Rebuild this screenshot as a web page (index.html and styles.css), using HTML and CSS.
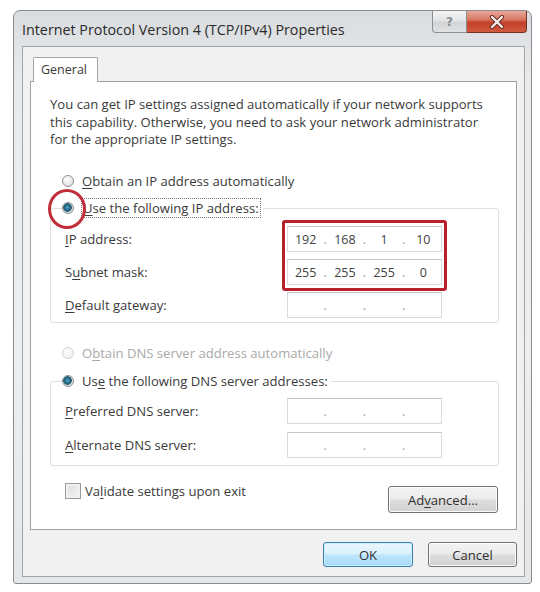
FILE: index.html
```html
<!DOCTYPE html>
<html>
<head>
<meta charset="utf-8">
<link rel="stylesheet" href="styles.css">
</head>
<body>
<div class="window">
  <div class="titlebar">
    <div class="title">Internet Protocol Version 4 (TCP/IPv4) Properties</div>
    <div class="caption-buttons">
      <div class="cbtn help"><span class="qmark">?</span></div>
      <div class="cbtn close">
        <svg width="16" height="14" viewBox="0 0 16 14"><path d="M3 2 L13 12 M13 2 L3 12" stroke="#6b2a22" stroke-width="4.2" stroke-linecap="round"/><path d="M3 2 L13 12 M13 2 L3 12" stroke="#f6eeee" stroke-width="2.4" stroke-linecap="round"/></svg>
      </div>
    </div>
  </div>
  <div class="client">
    <div class="tabs"><div class="tab">General</div></div>
    <div class="panel">
      <p class="desc">You can get IP settings assigned automatically if your network supports<br>this capability. Otherwise, you need to ask your network administrator<br>for the appropriate IP settings.</p>
      <div class="option first"><span class="radio"></span><span><u>O</u>btain an IP address automatically</span></div>
      <fieldset class="group ipgroup">
        <legend><span class="option"><span class="radio checked"></span><span class="focus"><u>U</u>se the following IP address:</span></span></legend>
        <div class="row"><span class="label"><u>I</u>P address:</span>
          <div class="ipfield"><span>192</span><span class="dot">.</span><span>168</span><span class="dot">.</span><span>1</span><span class="dot">.</span><span>10</span></div></div>
        <div class="row"><span class="label">S<u>u</u>bnet mask:</span>
          <div class="ipfield"><span>255</span><span class="dot">.</span><span>255</span><span class="dot">.</span><span>255</span><span class="dot">.</span><span>0</span></div></div>
        <div class="row"><span class="label"><u>D</u>efault gateway:</span>
          <div class="ipfield"><span></span><span class="dot">.</span><span></span><span class="dot">.</span><span></span><span class="dot">.</span><span></span></div></div>
      </fieldset>
      <div class="option disabled"><span class="radio off"></span><span>O<u>b</u>tain DNS server address automatically</span></div>
      <fieldset class="group dnsgroup">
        <legend><span class="option"><span class="radio checked"></span><span>Us<u>e</u> the following DNS server addresses:</span></span></legend>
        <div class="row"><span class="label"><u>P</u>referred DNS server:</span>
          <div class="ipfield"><span></span><span class="dot">.</span><span></span><span class="dot">.</span><span></span><span class="dot">.</span><span></span></div></div>
        <div class="row"><span class="label"><u>A</u>lternate DNS server:</span>
          <div class="ipfield"><span></span><span class="dot">.</span><span></span><span class="dot">.</span><span></span><span class="dot">.</span><span></span></div></div>
      </fieldset>
      <div class="bottomrow">
        <div class="check"><span class="checkbox"></span><span>Va<u>l</u>idate settings upon exit</span></div>
        <div class="btn advanced">Ad<u>v</u>anced...</div>
      </div>
    </div>
    <div class="footer">
      <div class="btn ok">OK</div>
      <div class="btn cancel">Cancel</div>
    </div>
  </div>
</div>
<div class="mark rect"></div>
<div class="mark circle"></div>
</body>
</html>
```
FILE: styles.css
```css
body {
  margin: 0;
  background: #ffffff;
  font-family: "Open Sans", "Noto Sans", sans-serif;
  font-size: 13.1px;
  color: #3a3a3a;
  position: relative;
}
u { text-decoration: underline; text-underline-offset: 2px; }

.window {
  margin: 10px 0 0 13px;
  width: 519px;
  height: 574px;
  box-sizing: border-box;
  border: 1px solid #8a8d90;
  border-radius: 7px 7px 3px 3px;
  background: linear-gradient(#d9dcdf, #e8eaec 12%, #eceeef 60%, #e4e6e8);
  display: flex;
  flex-direction: column;
}
.titlebar {
  height: 35px;
  flex-shrink: 0;
  display: flex;
  justify-content: space-between;
}
.title {
  margin-left: 8px;
  padding-top: 9px;
  line-height: 20px;
  font-size: 14.3px;
  color: #2a2a2a;
}
.caption-buttons {
  display: flex;
  margin-right: 4px;
  height: 22px;
}
.cbtn {
  box-sizing: border-box;
  height: 22px;
  display: flex;
  align-items: center;
  justify-content: center;
}
.cbtn.help {
  width: 35px;
  border: 1px solid #8e9194;
  border-top: none;
  border-radius: 0 0 0 4px;
  background: linear-gradient(#f3f4f5, #e2e4e6 45%, #d2d4d6 55%, #dfe1e3);
}
.qmark {
  font-family: "DejaVu Sans", sans-serif;
  font-weight: bold;
  font-size: 12px;
  color: #8a8c8e;
}
.cbtn.close {
  width: 60px;
  border: 1px solid #7a3026;
  border-top: none;
  border-left: none;
  border-radius: 0 0 4px 0;
  background: linear-gradient(#e8a898, #d77a63 40%, #c4402a 55%, #cf5b40);
}

.client {
  margin: 0 6px 6px 8px;
  flex: 1;
  background: #f1f1f1;
  border: 1px solid #a2a5a8;
  display: flex;
  flex-direction: column;
}
.tabs {
  display: flex;
  padding: 10px 0 0 10px;
}
.tab {
  width: 65px;
  height: 25px;
  box-sizing: border-box;
  border: 1px solid #a4a4a4;
  border-bottom: none;
  border-radius: 2px 2px 0 0;
  background: #ffffff;
  padding-left: 7px;
  line-height: 23px;
  font-size: 12.5px;
  margin-bottom: -1px;
  position: relative;
  z-index: 1;
}
.panel {
  margin: 0 7px;
  height: 449px;
  box-sizing: border-box;
  border: 1px solid #a0a0a0;
  background: #ffffff;
  padding: 14px 17px 0 19px;
}
.desc {
  margin: 0;
  line-height: 17.5px;
}
.option {
  display: flex;
  align-items: center;
  height: 20px;
  gap: 8px;
}
.option.first { margin-top: 22.5px; padding-left: 12px; }
.option.disabled { margin-top: 20px; padding-left: 12px; color: #a9a9a9; }
.focus { outline: 1px dotted #7a7a7a; outline-offset: 0; padding: 0 1px; }

.radio {
  width: 12px;
  height: 12px;
  box-sizing: border-box;
  border-radius: 50%;
  border: 1px solid #8d9296;
  background: radial-gradient(circle at 40% 35%, #ffffff, #d4d6d8);
  flex-shrink: 0;
}
.radio.checked {
  background: radial-gradient(circle at 45% 45%, #5aa6c4 0, #1d6483 3px, #2c5a70 4px, #d8dcde 4.6px, #f6f6f6);
}
.radio.off {
  border-color: #d0d2d4;
  background: radial-gradient(circle at 40% 35%, #ffffff, #ececec);
}

.group {
  margin: 7px 0 0 0;
  border: 1px solid #dedede;
  border-radius: 3px;
}
.group legend {
  padding: 0 3px 0 0;
  margin-left: -3px;
}
.ipgroup { padding: 8px 0 4px 14px; }
.dnsgroup { margin-top: 8px; padding: 7px 0 7px 14px; }
.dnsgroup .row + .row { margin-top: 8px; }

.row {
  display: flex;
  align-items: center;
  height: 26px;
}
.row + .row { margin-top: 7px; }
.label { width: 222px; flex-shrink: 0; }

.ipfield {
  width: 155px;
  height: 26px;
  box-sizing: border-box;
  border: 1px solid #dadada;
  border-top-color: #c4c4c4;
  background: #ffffff;
  display: grid;
  grid-template-columns: 1fr 4px 1fr 4px 1fr 4px 1fr;
  align-items: center;
  text-align: center;
  font-size: 12.5px;
  color: #404040;
}
.ipfield .dot { display: flex; justify-content: center; color: #9a9a9a; }

.bottomrow {
  margin-top: 16px;
  padding-left: 15px;
  display: flex;
  justify-content: space-between;
  align-items: flex-start;
}
.check {
  display: flex;
  align-items: center;
  height: 18px;
  gap: 4px;
}
.checkbox {
  width: 16px;
  height: 16px;
  box-sizing: border-box;
  border: 1px solid #9a9a9a;
  background: linear-gradient(135deg, #dcdcdc, #f5f5f5);
  box-shadow: inset 0 0 0 2px #f0f0f0;
}

.btn {
  box-sizing: border-box;
  height: 25px;
  display: flex;
  align-items: center;
  justify-content: center;
  border: 1px solid #737373;
  border-radius: 3px;
  background: linear-gradient(#f3f3f3, #ebebeb 48%, #dddddd 52%, #d2d2d2);
  box-shadow: inset 0 0 0 1px #fbfbfb;
  color: #303030;
}
.btn.advanced {
  width: 110px;
  height: 27px;
  margin-top: 4px;
  margin-right: 1px;
}
.footer {
  display: flex;
  justify-content: flex-end;
  gap: 15px;
  margin: 12px 7px 0 0;
}
.btn.ok {
  width: 90px;
  border-color: #3c7fb1;
  background: linear-gradient(#eaf6fd, #d9f0fc 48%, #bee6fd 52%, #a7d9f5);
  box-shadow: inset 0 0 0 1px #c8f0ff;
}
.btn.cancel { width: 89px; }

.mark {
  position: absolute;
  box-sizing: border-box;
}
.mark.rect {
  left: 282px;
  top: 220px;
  width: 165px;
  height: 71px;
  border: 3px solid #b8202e;
  border-radius: 3px;
}
.mark.circle {
  left: 48px;
  top: 189px;
  width: 38px;
  height: 40px;
  border: 3px solid #c02e3a;
  border-radius: 50%;
}
```
